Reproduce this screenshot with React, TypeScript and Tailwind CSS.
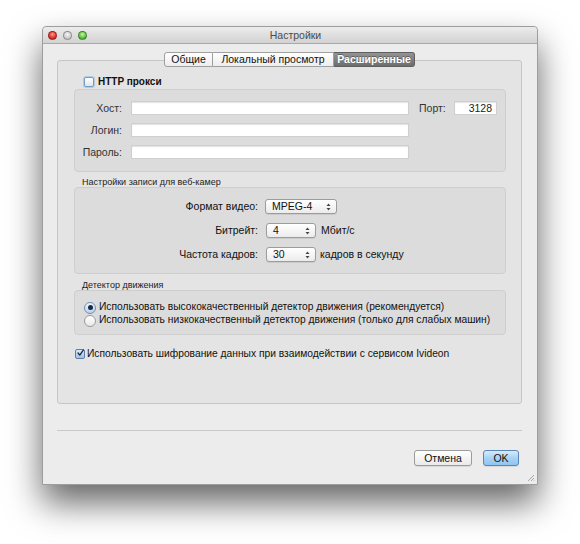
import type { FunctionComponent, ReactNode } from "react";

const font = { fontFamily: '"Liberation Sans", Arial, sans-serif' };

const Light: FunctionComponent<{ color: string }> = ({ color }) => (
  <span className={`h-[9px] w-[9px] rounded-full border border-black/30 ${color}`} />
);

const TextInput: FunctionComponent<{ value?: string; width: string }> = ({
  value,
  width,
}) => (
  <div
    className={`flex h-[14px] items-center justify-end border border-[#cfcfcf] bg-white pr-[4px] text-[10.5px] leading-none text-[#222] shadow-[inset_0_1px_1px_rgba(0,0,0,0.12)] ${width}`}
  >
    {value}
  </div>
);

const Arrows = () => (
  <svg width="5" height="8" viewBox="0 0 5 8" className="shrink-0">
    <path d="M2.5 0.5 L4.5 3 L0.5 3 Z" fill="#444" />
    <path d="M2.5 7.5 L4.5 5 L0.5 5 Z" fill="#444" />
  </svg>
);

const Popup: FunctionComponent<{ value: string; width: string }> = ({
  value,
  width,
}) => (
  <div
    className={`flex h-[15px] items-center justify-between rounded-[3px] border border-[#9c9c9c] bg-gradient-to-b from-white to-[#ececec] pl-[6px] pr-[5px] text-[10.5px] leading-none text-[#111] shadow-[0_1px_0_rgba(0,0,0,0.08)] ${width}`}
  >
    <span>{value}</span>
    <Arrows />
  </div>
);

const Group: FunctionComponent<{ className: string; children: ReactNode }> = ({
  className,
  children,
}) => (
  <div
    className={`rounded-[4px] border border-[#cecece] bg-[#dcdcdc] ${className}`}
  >
    {children}
  </div>
);

const Caption: FunctionComponent<{ text: string; mt: string }> = ({
  text,
  mt,
}) => (
  <div className={`h-[10px] whitespace-nowrap pl-[8px] text-[9px] leading-[10px] text-[#222] ${mt}`}>
    {text}
  </div>
);

const Radio: FunctionComponent<{ checked?: boolean }> = ({ checked }) => (
  <span
    className={`flex h-[12px] w-[12px] shrink-0 items-center justify-center rounded-full border ${
      checked
        ? "border-[#6c8fb5] bg-gradient-to-b from-[#eef5fc] to-[#b9d3ee]"
        : "border-[#9a9a9a] bg-gradient-to-b from-white to-[#e9e9e9]"
    }`}
  >
    {checked && <span className="h-[5px] w-[5px] rounded-full bg-[#1d2a3a]" />}
  </span>
);

export default function App() {
  return (
    <div
      className="h-[544px] w-[580px] bg-white pl-[42px] pt-[26px]"
      style={font}
    >
      <div className="relative flex h-[459px] w-[496px] flex-col rounded-t-[4px] border border-[#9d9d9d] bg-[#ececec] shadow-[0_18px_34px_rgba(0,0,0,0.6)]">
        {/* title bar */}
        <div className="flex h-[17px] shrink-0 items-center rounded-t-[4px] border-b border-[#a9a9a9] bg-gradient-to-b from-[#ececec] to-[#d2d2d2]">
          <div className="flex items-center gap-[6px] pl-[5px]">
            <Light color="bg-[radial-gradient(circle_at_50%_35%,#ff9a8f,#e0312a_60%,#b51a14)]" />
            <Light color="bg-[radial-gradient(circle_at_50%_35%,#f4f4f4,#cfcfcf_60%,#a9a9a9)]" />
            <Light color="bg-[radial-gradient(circle_at_50%_35%,#c9f5a7,#5ec33a_60%,#2f8f1c)]" />
          </div>
          <div className="flex-1 pr-[33px] text-center text-[10.5px] leading-none text-[#4a4a4a]">
            Настройки
          </div>
        </div>

        <div className="flex flex-1 flex-col pl-[14px] pr-[15px] pt-[8px]">
          {/* tabs */}
          <div className="relative z-10 flex h-[15px] justify-center">
            <div className="flex h-[15px] w-[49px] items-center justify-center rounded-l-[3px] border border-[#9f9f9f] bg-gradient-to-b from-white to-[#ededed] text-[10.5px] leading-none text-[#111]">
              Общие
            </div>
            <div className="flex h-[15px] w-[121px] items-center justify-center border-y border-r border-[#9f9f9f] bg-gradient-to-b from-white to-[#ededed] text-[10.5px] leading-none text-[#111]">
              Локальный просмотр
            </div>
            <div className="flex h-[15px] w-[81px] items-center justify-center rounded-r-[3px] border-y border-r border-[#5f5f5f] bg-gradient-to-b from-[#939393] to-[#6d6d6d] text-[10.5px] font-bold leading-none text-white [text-shadow:0_-1px_0_rgba(0,0,0,0.35)]">
              Расширенные
            </div>
          </div>

          {/* tab panel */}
          <div className="-mt-[7px] flex h-[344px] flex-col rounded-[3px] border border-[#c6c6c6] bg-[#e4e4e4] pl-[16px] pr-[15px] pt-[15px]">
            <div className="flex h-[12px] items-center gap-[4px] pl-[10px]">
              <span className="h-[10px] w-[10px] rounded-[2px] border border-[#6f9ccb] bg-gradient-to-b from-white to-[#e6e6e6] shadow-[0_0_0_1px_rgba(120,170,230,0.45)]" />
              <span className="text-[10px] font-bold leading-none text-[#111]">
                HTTP прокси
              </span>
            </div>

            <Group className="mt-[1px] flex h-[83px] flex-col gap-[8px] pt-[11px]">
              <div className="flex h-[14px] items-center">
                <span className="w-[47px] text-right text-[10.5px] leading-none text-[#333]">
                  Хост:
                </span>
                <div className="ml-[9px]">
                  <TextInput width="w-[278px]" />
                </div>
                <span className="ml-[10px] w-[35px] text-[10.5px] leading-none text-[#333]">
                  Порт:
                </span>
                <TextInput value="3128" width="w-[43px]" />
              </div>
              <div className="flex h-[14px] items-center">
                <span className="w-[47px] text-right text-[10.5px] leading-none text-[#333]">
                  Логин:
                </span>
                <div className="ml-[9px]">
                  <TextInput width="w-[278px]" />
                </div>
              </div>
              <div className="flex h-[14px] items-center">
                <span className="w-[47px] text-right text-[10.5px] leading-none text-[#333]">
                  Пароль:
                </span>
                <div className="ml-[9px]">
                  <TextInput width="w-[278px]" />
                </div>
              </div>
            </Group>

            <Caption text="Настройки записи для веб-камер" mt="mt-[5px]" />
            <Group className="flex h-[87px] flex-col gap-[9px] pt-[11px]">
              <div className="flex h-[15px] items-center">
                <span className="w-[183px] text-right text-[10.5px] leading-none text-[#111]">
                  Формат видео:
                </span>
                <div className="ml-[7px]">
                  <Popup value="MPEG-4" width="w-[72px]" />
                </div>
              </div>
              <div className="flex h-[15px] items-center">
                <span className="w-[183px] text-right text-[10.5px] leading-none text-[#111]">
                  Битрейт:
                </span>
                <div className="ml-[8px]">
                  <Popup value="4" width="w-[50px]" />
                </div>
                <span className="ml-[5px] text-[10.5px] leading-none text-[#111]">
                  Мбит/с
                </span>
              </div>
              <div className="flex h-[15px] items-center">
                <span className="w-[183px] text-right text-[10.5px] leading-none text-[#111]">
                  Частота кадров:
                </span>
                <div className="ml-[8px]">
                  <Popup value="30" width="w-[50px]" />
                </div>
                <span className="ml-[4px] text-[10.5px] leading-none text-[#111]">
                  кадров в секунду
                </span>
              </div>
            </Group>

            <Caption text="Детектор движения" mt="mt-[6px]" />
            <Group className="flex h-[45px] flex-col pl-[9px] pt-[10px]">
              <div className="flex h-[13px] items-center gap-[3px] whitespace-nowrap text-[10.25px] leading-none text-[#111]">
                <Radio checked />
                Использовать высококачественный детектор движения (рекомендуется)
              </div>
              <div className="flex h-[13px] items-center gap-[3px] whitespace-nowrap text-[10.25px] leading-none text-[#111]">
                <Radio />
                Использовать низкокачественный детектор движения (только для слабых машин)
              </div>
            </Group>

            <div className="mt-[14px] flex h-[10px] items-center gap-[2px] whitespace-nowrap pl-[1px] text-[10.25px] leading-none text-[#111]">
              <span className="flex h-[10px] w-[10px] shrink-0 items-center justify-center rounded-[2px] border border-[#5d7fa6] bg-gradient-to-b from-[#dbe9f8] to-[#9fc0e6]">
                <svg width="10" height="10" viewBox="0 0 10 10" className="-mt-[2px] ml-[1px]">
                  <path
                    d="M1.5 5 L4 8 L9 0.8"
                    fill="none"
                    stroke="#15243a"
                    strokeWidth="1.8"
                    strokeLinecap="round"
                    strokeLinejoin="round"
                  />
                </svg>
              </span>
              Использовать шифрование данных при взаимодействии с сервисом Ivideon
            </div>
          </div>

          {/* separator */}
          <div className="mt-[26px] h-[2px] border-t border-[#c9c9c9] border-b-white" />

          {/* buttons */}
          <div className="mt-[18px] flex justify-end gap-[11px] pr-[3px]">
            <button className="flex h-[16px] w-[58px] items-center justify-center rounded-[3px] border border-[#9c9c9c] bg-gradient-to-b from-white to-[#eaeaea] text-[10.5px] leading-none text-[#111] shadow-[0_1px_0_rgba(0,0,0,0.08)]">
              Отмена
            </button>
            <button className="flex h-[16px] w-[36px] items-center justify-center rounded-[3px] border border-[#5b86b8] bg-gradient-to-b from-[#d6ebfb] via-[#a9d2f4] to-[#8ec6f1] text-[10.5px] leading-none text-[#111] shadow-[0_1px_0_rgba(0,0,0,0.08)]">
              OK
            </button>
          </div>
        </div>

        {/* resize grip */}
        <svg
          width="8"
          height="8"
          viewBox="0 0 8 8"
          className="absolute bottom-[2px] right-[2px]"
        >
          <path d="M7 1 L1 7 M7 4 L4 7 M7 6.5 L6.5 7" stroke="#a6a6a6" strokeWidth="1" />
        </svg>
      </div>
    </div>
  );
}
